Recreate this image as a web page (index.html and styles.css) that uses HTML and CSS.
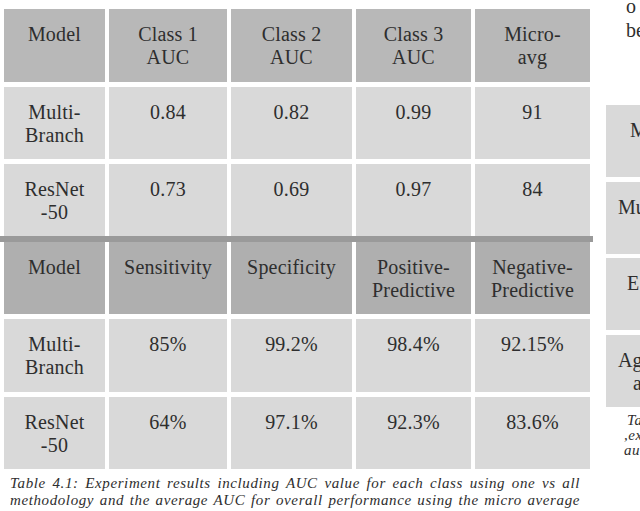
FILE: index.html
```html
<!DOCTYPE html>
<html>
<head>
<meta charset="utf-8">
<link rel="stylesheet" href="styles.css">
</head>
<body>
<div class="page">
  <div class="main">
    <div class="grid">
      <div class="cell head">Model</div>
      <div class="cell head">Class 1<br>AUC</div>
      <div class="cell head">Class 2<br>AUC</div>
      <div class="cell head">Class 3<br>AUC</div>
      <div class="cell head">Micro-<br>avg</div>

      <div class="cell">Multi-<br>Branch</div>
      <div class="cell">0.84</div>
      <div class="cell">0.82</div>
      <div class="cell">0.99</div>
      <div class="cell">91</div>

      <div class="cell">ResNet<br>-50</div>
      <div class="cell">0.73</div>
      <div class="cell">0.69</div>
      <div class="cell">0.97</div>
      <div class="cell">84</div>
    </div>
    <div class="divider"></div>
    <div class="grid grid2">
      <div class="cell head2">Model</div>
      <div class="cell head2">Sensitivity</div>
      <div class="cell head2">Specificity</div>
      <div class="cell head2">Positive-<br>Predictive</div>
      <div class="cell head2">Negative-<br>Predictive</div>

      <div class="cell">Multi-<br>Branch</div>
      <div class="cell">85%</div>
      <div class="cell">99.2%</div>
      <div class="cell">98.4%</div>
      <div class="cell">92.15%</div>

      <div class="cell">ResNet<br>-50</div>
      <div class="cell">64%</div>
      <div class="cell">97.1%</div>
      <div class="cell">92.3%</div>
      <div class="cell">83.6%</div>
    </div>
    <p class="caption">Table 4.1: Experiment results including AUC value for each class using one vs all methodology and the average AUC for overall performance using the micro average</p>
  </div>
  <div class="side">
    <p class="side-text"><span class="s1">o</span><span class="s2">be</span></p>
    <div class="side-table">
      <div class="scell head"><span class="p-m">M</span></div>
      <div class="scell"><span class="p-mu">Mu</span></div>
      <div class="scell"><span class="p-e">E</span></div>
      <div class="scell"><span class="p-ag">Ag</span><br><span class="p-a">a</span></div>
    </div>
    <p class="side-caption"><span class="l1">Ta</span><span class="l2">,ex</span><span class="l3">au</span></p>
  </div>
</div>
</body>
</html>
```
FILE: styles.css
```css
body {
  margin: 0;
  width: 640px;
  height: 511px;
  overflow: hidden;
  background: #ffffff;
  font-family: "Liberation Serif", "Times New Roman", serif;
  color: #2e2e2e;
}

.page {
  display: flex;
  align-items: flex-start;
}

.main {
  width: 594px;
  flex: none;
  padding-top: 9px;
}

.grid {
  display: grid;
  grid-template-columns: 101px 118px 121px 115px 115px;
  grid-template-rows: 73px 72px 72px;
  column-gap: 4px;
  row-gap: 5px;
  padding-left: 4px;
}

.grid2 {
  grid-template-rows: 72px 73px 72px;
}

.cell {
  background: #d9d9d9;
  text-align: center;
  font-size: 20px;
  line-height: 23px;
  letter-spacing: 0.2px;
  padding-top: 14px;
  box-sizing: border-box;
}

.head {
  background: #b8b8b8;
}

.head2 {
  background: #afafaf;
}

.divider {
  width: 593px;
  height: 6px;
  background: #9a9a9a;
}

.caption {
  margin: 6px 0 0 10px;
  width: 570px;
  font-style: italic;
  font-size: 15px;
  line-height: 17px;
  letter-spacing: 0.6px;
  text-align: justify;
  text-align-last: justify;
}

.side {
  margin-left: 12px;
  width: 34px;
  flex: none;
}

.side-text {
  margin: 0;
  padding-left: 20px;
  font-size: 20px;
}

.side-text span {
  display: block;
}

.side-text .s1 {
  line-height: 12px;
}

.side-text .s2 {
  margin-top: 5px;
  line-height: 26px;
}

.side-table {
  margin-top: 62px;
  display: grid;
  grid-template-rows: 72px 72px 72px 72px;
  row-gap: 4.5px;
}

.scell {
  background: #d9d9d9;
  font-size: 20px;
  line-height: 23px;
  padding-top: 14px;
  box-sizing: border-box;
}

.p-m {
  padding-left: 24px;
}

.p-mu {
  padding-left: 12px;
}

.p-e {
  padding-left: 21px;
}

.p-ag {
  padding-left: 12px;
}

.p-a {
  padding-left: 27px;
}

.side-caption {
  margin: 6px 0 0 0;
  font-style: italic;
  font-size: 15px;
  line-height: 15px;
  letter-spacing: 0.6px;
}

.side-caption span {
  display: block;
}

.side-caption .l1 {
  padding-left: 21px;
}

.side-caption .l2 {
  padding-left: 18px;
}

.side-caption .l3 {
  padding-left: 18px;
}
```
